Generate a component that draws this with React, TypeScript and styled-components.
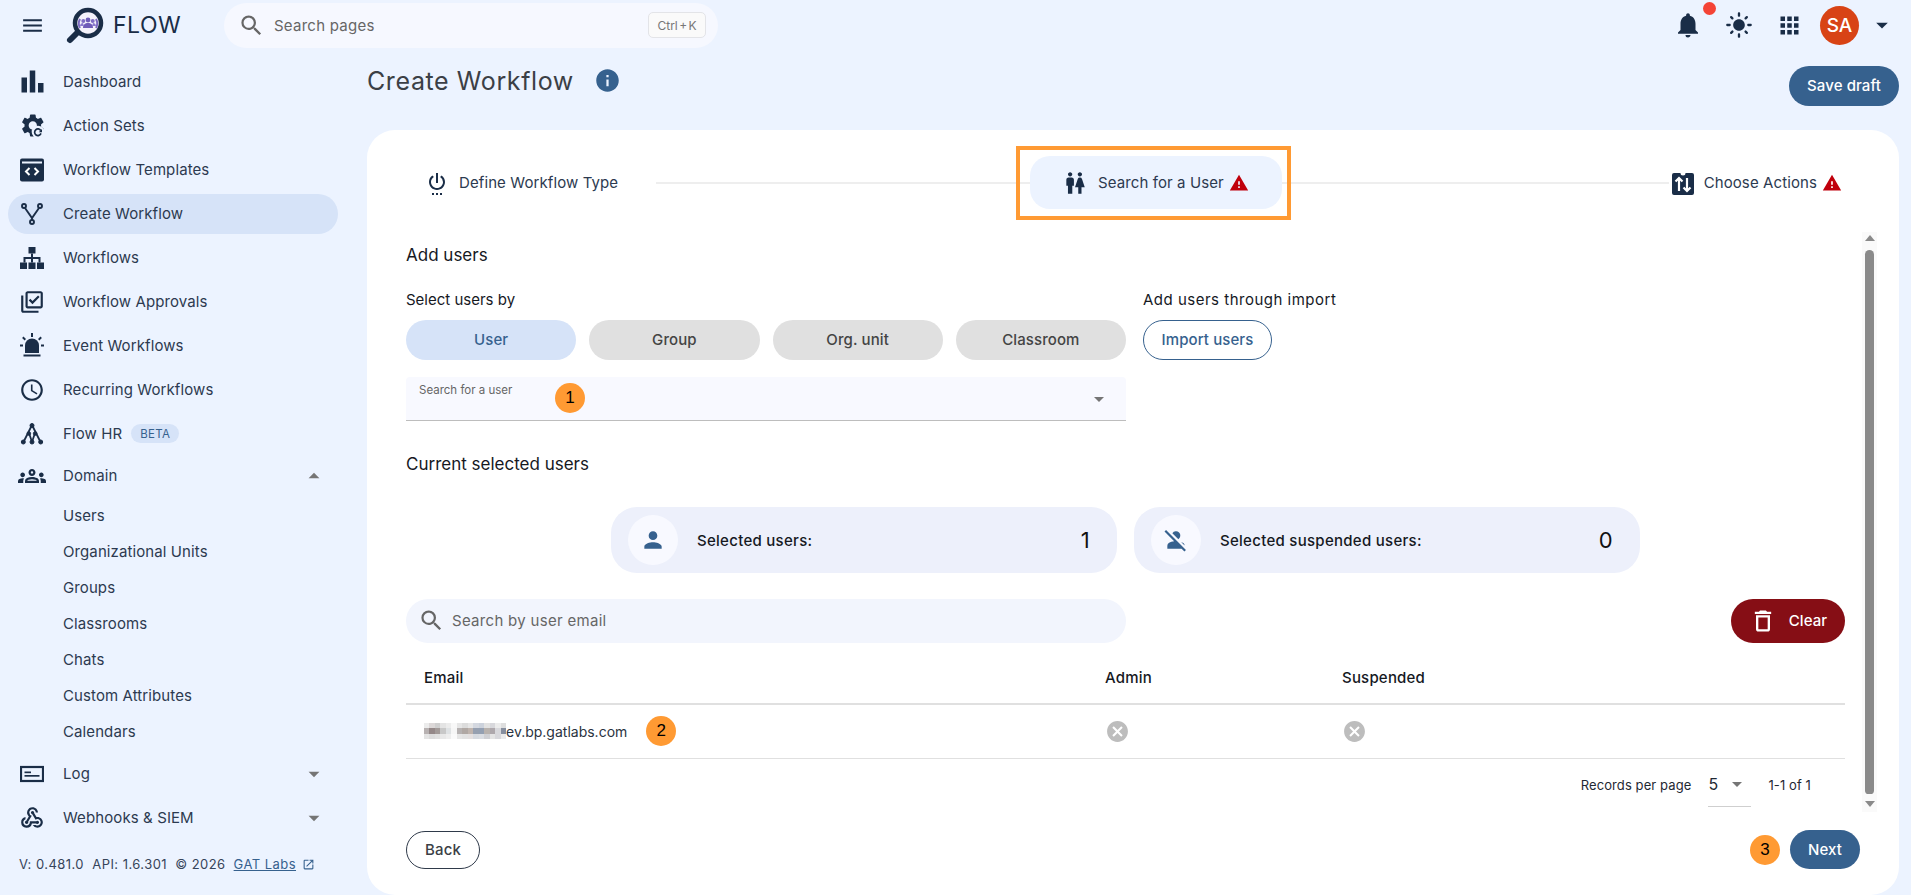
import React from "react";
import styled, { createGlobalStyle } from "styled-components";
import {
  MdMenu, MdSearch, MdNotifications, MdLightMode, MdApps, MdArrowDropDown, MdArrowDropUp, MdBarChart,
  MdOutlineLibraryAddCheck, MdAccessTime, MdOutlineGroups, MdOutlineWebhook, MdOpenInNew,
  MdInfo, MdSettingsPower, MdWc, MdWarning, MdPerson, MdPersonOff, MdOutlineDelete, MdCancel,
} from "react-icons/md";

const navy = "#1a2d47";
const primary = "#36618e";

const Global = createGlobalStyle`
  html, body { margin: 0; padding: 0; height: 100%; }
  body { background: #ecf3ff; font-family: Inter, "Liberation Sans", sans-serif; overflow: hidden; color: #111; }
  * { box-sizing: border-box; }
`;

const Page = styled.div`
  width: 1911px;
  height: 895px;
  display: flex;
  flex-direction: column;
  overflow: hidden;
`;

const TopBar = styled.header`
  height: 50px;
  flex: none;
  display: flex;
  align-items: center;
  padding-left: 20px;
  padding-right: 15px;
  color: ${navy};
`;

const Brand = styled.div`
  display: flex;
  align-items: center;
  margin-left: 19px;
  width: 160px;
`;

const BrandName = styled.span`
  font-size: 23px;
  letter-spacing: 0.5px;
  margin-left: 9px;
  color: ${navy};
`;

const PageSearch = styled.div`
  width: 494px;
  height: 45px;
  border-radius: 23px;
  background: #f6f8ff;
  display: flex;
  align-items: center;
  padding: 0 12px 0 14px;
  color: #666;
  font-size: 15px;
  letter-spacing: 0.25px;
  gap: 9px;
`;

const Grow = styled.span`
  flex: 1;
`;

const Kbd = styled.span`
  width: 58px;
  height: 26px;
  border: 1px solid #e3e4e8;
  border-radius: 5px;
  background: #fafafa;
  font-size: 12px;
  letter-spacing: 0;
  word-spacing: -2px;
  color: #777;
  display: flex;
  align-items: center;
  justify-content: center;
`;

const TopActions = styled.div`
  margin-left: auto;
  display: flex;
  align-items: center;
`;

const BellWrap = styled.span`
  position: relative;
  display: flex;
  margin-right: 22px;
`;

const RedDot = styled.span`
  position: absolute;
  width: 13px;
  height: 13px;
  border-radius: 50%;
  background: #f44336;
  top: -8px;
  right: -13px;
`;

const Avatar = styled.span`
  width: 39px;
  height: 39px;
  border-radius: 50%;
  background: #d84315;
  color: #fff;
  font-size: 19px;
  font-weight: 500;
  display: flex;
  align-items: center;
  justify-content: center;
  margin-left: 17px;
  margin-right: 9px;
`;

const AppsSlot = styled.span`
  display: flex;
  margin-left: 23px;
`;

const Body = styled.div`
  flex: 1;
  min-height: 0;
  display: flex;
`;

const Sidebar = styled.nav`
  width: 367px;
  flex: none;
  padding: 12px 0 0 8px;
  color: #2c3a50;
  font-size: 15px;
  letter-spacing: 0.1px;
`;

const NavItem = styled.div<{ $active?: boolean; $h?: number; $mb?: number }>`
  width: 330px;
  height: ${(p) => p.$h ?? 40}px;
  margin-bottom: ${(p) => p.$mb ?? 4}px;
  border-radius: 20px;
  display: flex;
  align-items: center;
  padding: 0 12px 1px;
  gap: 19px;
  background: ${(p) => (p.$active ? "#d6e3f8" : "transparent")};
`;

const NavIcon = styled.span`
  width: 24px;
  flex: none;
  display: flex;
  align-items: center;
  justify-content: center;
  color: ${navy};
  svg { flex: none; }
`;

const NavChevron = styled.span`
  margin-left: auto;
  margin-right: -1px;
  display: flex;
  color: #757575;
`;

const SubItem = styled.div`
  height: 36px;
  padding: 0 0 1px 55px;
  display: flex;
  align-items: center;
`;

const SubList = styled.div`
  margin-top: 4px;
  margin-bottom: 4px;
`;

const Beta = styled.span`
  height: 19px;
  padding: 0 9px;
  margin-left: -10px;
  border-radius: 10px;
  background: #d6e3f8;
  color: ${primary};
  font-size: 11.5px;
  letter-spacing: 0.3px;
  display: flex;
  align-items: center;
`;

const SideFooter = styled.div`
  margin-top: 18px;
  padding-left: 11px;
  font-size: 13px;
  letter-spacing: 0.45px;
  color: #36445a;
  display: flex;
  align-items: center;
  white-space: nowrap;
  a {
    color: ${primary};
    text-decoration: underline;
    margin-left: 8px;
  }
  svg {
    color: ${primary};
    margin-left: 6px;
  }
`;

const Main = styled.main`
  flex: 1;
  min-width: 0;
  padding-right: 12px;
  display: flex;
  flex-direction: column;
`;

const TitleRow = styled.div`
  height: 80px;
  flex: none;
  display: flex;
  align-items: flex-start;
  padding-top: 16px;
`;

const Title = styled.h1`
  margin: 1px 0 0;
  font-size: 25px;
  line-height: 28px;
  letter-spacing: 0.6px;
  font-weight: 400;
  color: #3b3f46;
`;

const InfoIcon = styled.span`
  display: flex;
  margin: 1px 0 0 20px;
  color: ${primary};
`;

const Pill = styled.button<{ $bg?: string; $fg?: string; $w?: number; $h?: number; $border?: string }>`
  height: ${(p) => p.$h ?? 40}px;
  width: ${(p) => (p.$w ? `${p.$w}px` : "auto")};
  border-radius: 20px;
  border: ${(p) => p.$border ?? "none"};
  background: ${(p) => p.$bg ?? primary};
  color: ${(p) => p.$fg ?? "#fff"};
  font: 500 15px Inter, "Liberation Sans", sans-serif;
  letter-spacing: 0.1px;
  display: inline-flex;
  align-items: center;
  justify-content: center;
  padding: 0 0 1px;
  flex: none;
`;

const SaveDraft = styled(Pill)`
  margin-left: auto;
`;

const Card = styled.section`
  flex: 1;
  min-height: 0;
  background: #fff;
  border-radius: 28px;
  padding: 26px 22px 0 39px;
  display: flex;
  flex-direction: column;
`;

const Stepper = styled.div`
  height: 53px;
  flex: none;
  display: flex;
  align-items: center;
  color: #2c3a50;
  font-size: 15px;
  letter-spacing: 0.1px;
  padding-right: 35px;
`;

const StepLine = styled.span<{ $w?: number }>`
  flex: ${(p) => (p.$w ? `0 0 ${p.$w}px` : "1")};
  height: 2px;
  background: #eeeeee;
`;

const Step = styled.div<{ $active?: boolean }>`
  position: relative;
  flex: none;
  height: 53px;
  display: flex;
  align-items: center;
  gap: 10px;
  border-radius: 20px;
  white-space: nowrap;
  background: ${(p) => (p.$active ? "#ecf3ff" : "transparent")};
  svg { color: ${navy}; flex: none; }
  svg.warn { color: #c0000c; margin-left: -5px; }
`;

const StepOne = styled(Step)`
  padding-left: 19px;
  width: 250px;
`;

const StepTwo = styled(Step)`
  width: 252px;
  padding-left: 32px;
`;

const StepThree = styled(Step)`
  padding-left: 3px;
`;

const Highlight = styled.span`
  position: absolute;
  left: -14px;
  right: -9px;
  top: -10px;
  bottom: -11px;
  border: 4px solid #ff9a33;
  pointer-events: none;
`;

const ScrollRow = styled.div`
  flex: none;
  margin-top: 23px;
  height: 580px;
  display: flex;
  gap: 17px;
`;

const ScrollContent = styled.div`
  width: 1439px;
  flex: none;
`;

const Scrollbar = styled.div`
  width: 15px;
  flex: none;
  background: #fafafa;
  display: flex;
  flex-direction: column;
  align-items: center;
  padding: 3px 0;
`;

const ScrollThumb = styled.div`
  width: 9px;
  height: 544px;
  margin: 9px 0 7px;
  background: #8a8a8a;
  border-radius: 5px 5px 4px 4px;
`;

const ArrowUp = styled.span`
  width: 0;
  height: 0;
  border-left: 5px solid transparent;
  border-right: 5px solid transparent;
  border-bottom: 6px solid #8a8a8a;
`;

const ArrowDown = styled(ArrowUp)`
  border-bottom: none;
  border-top: 6px solid #8a8a8a;
`;

const SectionTitle = styled.h2`
  margin: 0;
  font-size: 17px;
  font-weight: 400;
  line-height: 24px;
  color: #16191f;
`;

const AddTitle = styled(SectionTitle)`
  margin-top: 11px;
`;

const SelectGrid = styled.div`
  margin-top: 23px;
  display: grid;
  grid-template-columns: 720px auto;
  column-gap: 17px;
  justify-content: start;
  row-gap: 10px;
`;

const Label = styled.div`
  font-size: 15px;
  line-height: 20px;
  color: #16191f;
`;

const ImportLabel = styled(Label)`
  letter-spacing: 0.5px;
`;

const TypeButtons = styled.div`
  display: flex;
  gap: 13px;
`;

const TypeButton = styled(Pill)<{ $on?: boolean }>`
  flex: 1;
  background: ${(p) => (p.$on ? "#d6e3f8" : "#e0e0e0")};
  color: ${(p) => (p.$on ? primary : "#444")};
`;

const ImportButton = styled(Pill)`
  width: 129px;
`;

const SearchField = styled.div`
  position: relative;
  margin-top: 17px;
  width: 720px;
  height: 44px;
  background: #f8f9ff;
  border-radius: 4px 4px 0 0;
  border-bottom: 1px solid #bdbdbd;
  padding: 6px 13px;
  font-size: 11.5px;
  color: #666;
`;

const FieldArrow = styled.span`
  position: absolute;
  right: 15px;
  top: 10px;
  display: flex;
  color: #757575;
`;

const Badge = styled.span`
  width: 30px;
  height: 30px;
  border-radius: 50%;
  background: #ff9a33;
  color: #000;
  font: 400 17px "Liberation Sans", Arial, sans-serif;
  display: flex;
  align-items: center;
  justify-content: center;
  flex: none;
`;

const FieldBadge = styled(Badge)`
  position: absolute;
  left: 149px;
  top: 6px;
`;

const CurrentTitle = styled(SectionTitle)`
  margin-top: 31px;
`;

const Stats = styled.div`
  margin-top: 31px;
  display: flex;
  justify-content: center;
  gap: 17px;
`;

const StatCard = styled.div`
  width: 506px;
  height: 66px;
  border-radius: 26px;
  background: #edf0fb;
  display: flex;
  align-items: center;
  padding: 0 27px 0 17px;
  font-size: 15px;
  font-weight: 500;
  letter-spacing: 0.28px;
  color: #16191f;
`;

const StatIcon = styled.span`
  width: 50px;
  height: 50px;
  border-radius: 50%;
  background: #f8f9ff;
  color: ${primary};
  display: flex;
  align-items: center;
  justify-content: center;
  margin-right: 19px;
`;

const StatValue = styled.span`
  margin-left: auto;
  font-size: 22px;
  font-weight: 400;
  color: #111;
`;

const Toolbar = styled.div`
  margin-top: 26px;
  display: flex;
  justify-content: space-between;
  height: 44px;
`;

const EmailSearch = styled.div`
  width: 720px;
  height: 44px;
  border-radius: 22px;
  background: #f2f5fd;
  display: flex;
  align-items: center;
  padding: 0 0 1px 12px;
  gap: 7px;
  color: #666;
  font-size: 15px;
  letter-spacing: 0.3px;
`;

const ClearButton = styled(Pill)`
  width: 114px;
  height: 44px;
  border-radius: 22px;
  background: #860e15;
  gap: 12px;
`;

const Table = styled.table`
  margin-top: 9px;
  width: 100%;
  table-layout: fixed;
  border-collapse: collapse;
  font-size: 15px;
  color: #16191f;
`;

const Th = styled.th<{ $w?: number }>`
  width: ${(p) => (p.$w ? `${p.$w}px` : "auto")};
  height: 52px;
  padding: 0 0 0 18px;
  text-align: left;
  font-weight: 500;
  letter-spacing: 0.2px;
  border-bottom: 2px solid #e0e0e0;
`;

const Td = styled.td`
  height: 54px;
  padding: 0 0 0 18px;
  border-bottom: 1px solid #e0e0e0;
  color: #3c3c3c;
`;

const EmailCell = styled.div`
  display: flex;
  align-items: center;
  color: #2a3340;
  font-size: 14px;
`;

const cells = (colors: string[]) =>
  colors.map((c, i) => `${c} ${(i * 100) / colors.length}% ${((i + 1) * 100) / colors.length}%`).join(",");

const Blurred = styled.span`
  width: 82px;
  height: 16px;
  flex: none;
  background:
    linear-gradient(90deg, ${cells(["#ececec","#dcd8d8","#cfcfcf","#e4e4e4","#ececec","#f8f8f8","#e6e6e6","#dcdcdc","#e6e6e6","#d4d8e0","#ccd2dc","#e2e2e2","#d8d8dc","#ececec","#dedede"])}) 0 0 / 100% 5px no-repeat,
    linear-gradient(90deg, ${cells(["#b8b2b2","#948888","#a29a98","#c8c8c8","#dfe2e4","#f6f6f6","#b6b2b2","#b0a8a4","#bfb4ae","#96a0b0","#94a0b2","#b8b2ae","#aea8ac","#d8d8dc","#868e9e"])}) 0 5px / 100% 6px no-repeat,
    linear-gradient(90deg, ${cells(["#e4e4e4","#dcdcdc","#e0e0e0","#e8e8e8","#eeeeee","#fafafa","#e6e6e6","#e2e2e2","#e4e0e0","#d6dae0","#dadde2","#cfd0d4","#e4e4e4","#d8d8dc","#ebebeb"])}) 0 11px / 100% 5px no-repeat;
`;

const RowBadge = styled(Badge)`
  margin-left: 19px;
`;

const StatusIcon = styled.span`
  display: flex;
  color: #bdbdbd;
`;

const Pagination = styled.div`
  height: 48px;
  margin-top: 2px;
  display: flex;
  align-items: center;
  justify-content: flex-end;
  padding-right: 34px;
  font-size: 13px;
  letter-spacing: 0.1px;
  color: #1f2833;
`;

const PerPage = styled.div`
  width: 43px;
  height: 44px;
  margin: 0 17px 0 17px;
  border-bottom: 1px solid #cfcfcf;
  display: flex;
  align-items: center;
  justify-content: space-between;
  font-size: 16px;
  svg { color: #757575; margin-right: 2px; }
`;

const Footer = styled.div`
  flex: none;
  margin-top: 18px;
  padding-right: 17px;
  display: flex;
  align-items: center;
  justify-content: space-between;
`;

const BackButton = styled(Pill)`
  width: 74px;
  height: 38px;
  background: #fff;
  color: #3b3f46;
  border: 1.7px solid #2f3a4a;
`;

const NextGroup = styled.div`
  display: flex;
  align-items: center;
  gap: 10px;
`;

const NextButton = styled(Pill)`
  width: 70px;
  height: 39px;
`;

const Logo = () => (
  <svg width="40" height="40" viewBox="0 0 40 40">
    <path d="M14 27 L6 35" stroke={navy} strokeWidth="6" strokeLinecap="round" />
    <circle cx="24" cy="18" r="13" fill="#f4f2fb" stroke={navy} strokeWidth="4.5" />
    <path d="M16 14a9.500 9.500 0 0 0 0 9M32 14a9.500 9.500 0 0 1 0 9" stroke="#7a68c0" strokeWidth="2" fill="none" />
    <circle cx="24" cy="15" r="2.400" fill="#6f5cb8" />
    <circle cx="19.300" cy="16" r="2" fill="#7f6dc4" />
    <circle cx="28.700" cy="16" r="2" fill="#7f6dc4" />
    <path d="M19 23c0-3.500 2-5 5-5s5 1.500 5 5z" fill="#6f5cb8" />
    <path d="M16 21c0-2 1.500-3 3-3l1 3zM32 21c0-2-1.500-3-3-3l-1 3z" fill="#8a79cc" />
  </svg>
);

const ActionSetsIcon = () => (
  <svg width="24" height="24" viewBox="0 0 24 24">
    <g transform="translate(-1 -2.300) scale(1.150)" fill={navy}>
      <path d="M19.140 12.940c.04-.3.06-.61.06-.94 0-.32-.02-.64-.07-.94l2.030-1.580c.18-.14.23-.41.12-.61l-1.920-3.320c-.12-.22-.37-.29-.59-.22l-2.390.96c-.5-.38-1.030-.7-1.620-.94l-.36-2.540c-.04-.24-.24-.41-.48-.41h-3.840c-.24 0-.43.17-.47.41l-.36 2.540c-.59.24-1.130.57-1.620.94l-2.390-.96c-.22-.08-.47 0-.59.22L2.740 8.870c-.12.21-.08.47.12.61l2.030 1.580c-.05.3-.09.63-.09.94s.02.64.07.94l-2.030 1.580c-.18.14-.23.41-.12.61l1.920 3.320c.12.22.37.29.59.22l2.390-.96c.5.38 1.030.7 1.620.94l.36 2.540c.05.24.24.41.48.41h3.840c.24 0 .44-.17.47-.41l.36-2.540c.59-.24 1.130-.56 1.620-.94l2.390.96c.22.08.47 0 .59-.22l1.920-3.320c.12-.22.07-.47-.12-.61l-2.010-1.580zM12 15.600c-1.980 0-3.600-1.620-3.600-3.600s1.620-3.600 3.600-3.600 3.600 1.620 3.600 3.600-1.620 3.600-3.600 3.600z" />
    </g>
    <circle cx="18" cy="18" r="6.300" fill="#ecf3ff" />
    <path d="M20.800 16.600a3.300 3.300 0 1 0 .2 2.800" stroke={navy} strokeWidth="1.700" fill="none" />
    <path d="M22 15v3.200h-3.200z" fill={navy} />
  </svg>
);

const TemplatesIcon = () => (
  <svg width="24" height="24" viewBox="0 0 24 24">
    <rect x="0" y="0.500" width="24" height="23" rx="2" fill={navy} />
    <rect x="2" y="3.500" width="20" height="2" fill="#ecf3ff" />
    <path d="M9.500 10l-3.500 3.500 3.500 3.500M14.500 10l3.500 3.500-3.500 3.500" stroke="#fff" strokeWidth="2" fill="none" />
  </svg>
);

const ForkIcon = () => (
  <svg width="24" height="24" viewBox="0 0 24 24" fill="none" stroke={navy} strokeWidth="1.900">
    <circle cx="4" cy="4" r="2" />
    <circle cx="20" cy="4" r="2" />
    <circle cx="12" cy="20" r="2" />
    <path d="M5 6l7 10 7-10M12 16v2" />
  </svg>
);

const SitemapIcon = () => (
  <svg width="24" height="24" viewBox="0 0 24 24" fill={navy}>
    <rect x="8.500" y="1" width="7" height="6.500" />
    <rect x="0" y="16.500" width="7" height="6.500" />
    <rect x="8.500" y="16.500" width="7" height="6.500" />
    <rect x="17" y="16.500" width="7" height="6.500" />
    <path d="M11 7.500h2V11h7.500v5.500h-2V13H13v3.500h-2V13H5.500v3.500h-2V11H11z" />
  </svg>
);

const SirenIcon = () => (
  <svg width="24" height="26" viewBox="0 0 24 26" fill={navy}>
    <path d="M5 20v-7.500a7 7 0 0 1 14 0V20z" />
    <rect x="3.500" y="21.500" width="17" height="2" />
    <rect x="11" y="0" width="2" height="4" />
    <path d="M3.500 3.500l2.500 2.500-1.400 1.400-2.500-2.500zM20.500 3.500L18 6l1.400 1.400 2.500-2.500z" />
    <rect x="0" y="11.500" width="3" height="2" />
    <rect x="21" y="11.500" width="3" height="2" />
  </svg>
);

const TreeIcon = () => (
  <svg width="24" height="24" viewBox="0 0 24 24" fill={navy} stroke={navy}>
    <path d="M12 3L3.500 20M12 3l8.500 17M9 11l3 9M15 11l-3 9" strokeWidth="1.800" fill="none" />
    <circle cx="12" cy="3.500" r="2" />
    <circle cx="8.800" cy="11.500" r="1.800" />
    <circle cx="15.200" cy="11.500" r="1.800" />
    <circle cx="3.300" cy="20" r="2" />
    <circle cx="12" cy="20" r="2" />
    <circle cx="20.700" cy="20" r="2" />
  </svg>
);

const LogIcon = () => (
  <svg width="24" height="24" viewBox="0 0 24 24" fill="none">
    <rect x="1" y="5" width="22" height="14" stroke={navy} strokeWidth="2.200" />
    <rect x="4.500" y="9.500" width="6.500" height="1.700" fill={navy} />
    <rect x="4.500" y="13" width="15" height="1.700" fill={navy} />
  </svg>
);

const ActionsIcon = () => (
  <svg width="22" height="24" viewBox="0 0 22 24">
    <path d="M2 2h6.500a2.500 2.500 0 0 0 5 0H20a2 2 0 0 1 2 2v18a2 2 0 0 1-2 2H2a2 2 0 0 1-2-2V4a2 2 0 0 1 2-2z" fill={navy} />
    <path d="M7 20V7M3.500 10.500L7 7l3.500 3.500M15 7v13M11.500 16.500L15 20l3.500-3.500" stroke="#fff" strokeWidth="2.200" fill="none" />
  </svg>
);

const topNav: [React.ReactNode, string][] = [
  [<MdBarChart size={33} key="a" />, "Dashboard"],
  [<ActionSetsIcon key="b" />, "Action Sets"],
  [<TemplatesIcon key="c" />, "Workflow Templates"],
];

const midNav: [React.ReactNode, string][] = [
  [<SitemapIcon key="e" />, "Workflows"],
  [<MdOutlineLibraryAddCheck size={26} key="f" />, "Workflow Approvals"],
  [<SirenIcon key="g" />, "Event Workflows"],
  [<MdAccessTime size={26} key="h" />, "Recurring Workflows"],
];

const subs = ["Users", "Organizational Units", "Groups", "Classrooms", "Chats", "Custom Attributes", "Calendars"];

export default function App() {
  return (
    <Page>
      <Global />
      <TopBar>
        <MdMenu size={25} />
        <Brand>
          <Logo />
          <BrandName>FLOW</BrandName>
        </Brand>
        <PageSearch>
          <MdSearch size={27} />
          Search pages
          <Grow />
          <Kbd>Ctrl + K</Kbd>
        </PageSearch>
        <TopActions>
          <BellWrap>
            <MdNotifications size={30} />
            <RedDot />
          </BellWrap>
          <MdLightMode size={28} />
          <AppsSlot><MdApps size={27} /></AppsSlot>
          <Avatar>SA</Avatar>
          <MdArrowDropDown size={28} />
        </TopActions>
      </TopBar>
      <Body>
        <Sidebar>
          {topNav.map(([icon, label]) => (
            <NavItem key={label}><NavIcon>{icon}</NavIcon>{label}</NavItem>
          ))}
          <NavItem $active>
            <NavIcon><ForkIcon /></NavIcon>
            Create Workflow
          </NavItem>
          {midNav.map(([icon, label]) => (
            <NavItem key={label}><NavIcon>{icon}</NavIcon>{label}</NavItem>
          ))}
          <NavItem>
            <NavIcon><TreeIcon /></NavIcon>
            Flow HR
            <Beta>BETA</Beta>
          </NavItem>
          <NavItem $h={36} $mb={0}>
            <NavIcon><MdOutlineGroups size={28} /></NavIcon>
            Domain
            <NavChevron><MdArrowDropUp size={26} /></NavChevron>
          </NavItem>
          <SubList>
            {subs.map((s) => <SubItem key={s}>{s}</SubItem>)}
          </SubList>
          <NavItem>
            <NavIcon><LogIcon /></NavIcon>
            Log
            <NavChevron><MdArrowDropDown size={26} /></NavChevron>
          </NavItem>
          <NavItem $mb={0}>
            <NavIcon><MdOutlineWebhook size={26} /></NavIcon>
            Webhooks &amp; SIEM
            <NavChevron><MdArrowDropDown size={26} /></NavChevron>
          </NavItem>
          <SideFooter>
            V: 0.481.0&nbsp;&nbsp;API: 1.6.301&nbsp;&nbsp;© 2026 <a>GAT Labs</a>
            <MdOpenInNew size={13} />
          </SideFooter>
        </Sidebar>
        <Main>
          <TitleRow>
            <Title>Create Workflow</Title>
            <InfoIcon><MdInfo size={27} /></InfoIcon>
            <SaveDraft $w={110}>Save draft</SaveDraft>
          </TitleRow>
          <Card>
            <Stepper>
              <StepOne>
                <MdSettingsPower size={24} />
                Define Workflow Type
              </StepOne>
              <StepLine $w={374} />
              <StepTwo $active>
                <MdWc size={26} />
                Search for a User
                <MdWarning className="warn" size={20} />
                <Highlight />
              </StepTwo>
              <StepLine />
              <StepThree>
                <ActionsIcon />
                Choose Actions
                <MdWarning className="warn" size={20} />
              </StepThree>
            </Stepper>
            <ScrollRow>
              <ScrollContent>
                <AddTitle>Add users</AddTitle>
                <SelectGrid>
                  <Label>Select users by</Label>
                  <ImportLabel>Add users through import</ImportLabel>
                  <TypeButtons>
                    <TypeButton $on>User</TypeButton>
                    <TypeButton>Group</TypeButton>
                    <TypeButton>Org. unit</TypeButton>
                    <TypeButton>Classroom</TypeButton>
                  </TypeButtons>
                  <ImportButton $bg="#fff" $fg={primary} $border={`1px solid ${primary}`}>Import users</ImportButton>
                </SelectGrid>
                <SearchField>
                  Search for a user
                  <FieldBadge>1</FieldBadge>
                  <FieldArrow><MdArrowDropDown size={24} /></FieldArrow>
                </SearchField>
                <CurrentTitle>Current selected users</CurrentTitle>
                <Stats>
                  <StatCard>
                    <StatIcon><MdPerson size={26} /></StatIcon>
                    Selected users:
                    <StatValue>1</StatValue>
                  </StatCard>
                  <StatCard>
                    <StatIcon><MdPersonOff size={26} /></StatIcon>
                    Selected suspended users:
                    <StatValue>0</StatValue>
                  </StatCard>
                </Stats>
                <Toolbar>
                  <EmailSearch>
                    <MdSearch size={27} />
                    Search by user email
                  </EmailSearch>
                  <ClearButton>
                    <MdOutlineDelete size={28} />
                    Clear
                  </ClearButton>
                </Toolbar>
                <Table>
                  <thead>
                    <tr>
                      <Th $w={681}>Email</Th>
                      <Th $w={237}>Admin</Th>
                      <Th>Suspended</Th>
                    </tr>
                  </thead>
                  <tbody>
                    <tr>
                      <Td>
                        <EmailCell>
                          <Blurred />
                          ev.bp.gatlabs.com
                          <RowBadge>2</RowBadge>
                        </EmailCell>
                      </Td>
                      <Td><StatusIcon><MdCancel size={25} /></StatusIcon></Td>
                      <Td><StatusIcon><MdCancel size={25} /></StatusIcon></Td>
                    </tr>
                  </tbody>
                </Table>
                <Pagination>
                  Records per page
                  <PerPage>5<MdArrowDropDown size={24} /></PerPage>
                  1-1 of 1
                </Pagination>
              </ScrollContent>
              <Scrollbar>
                <ArrowUp />
                <ScrollThumb />
                <ArrowDown />
              </Scrollbar>
            </ScrollRow>
            <Footer>
              <BackButton>Back</BackButton>
              <NextGroup>
                <Badge>3</Badge>
                <NextButton>Next</NextButton>
              </NextGroup>
            </Footer>
          </Card>
        </Main>
      </Body>
    </Page>
  );
}
